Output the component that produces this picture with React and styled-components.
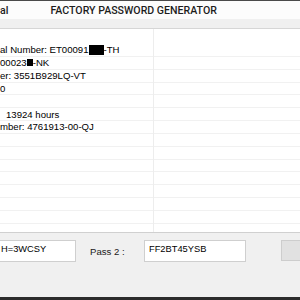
import styled, { createGlobalStyle } from "styled-components";

const GlobalStyle = createGlobalStyle`
  html, body {
    margin: 0;
    padding: 0;
    background: #f0f0f0;
    overflow: hidden;
  }
`;

const Window = styled.div`
  width: 300px;
  height: 300px;
  display: flex;
  flex-direction: column;
  overflow: hidden;
  background: #f0f0f0;
  font-family: "Liberation Sans", Arial, sans-serif;
  color: #000;
`;

const TitleBar = styled.div`
  height: 18px;
  border-top: 1px solid #4a4a4a;
  background: #fcfcfc;
  display: flex;
  align-items: center;
  font-family: Roboto, "Liberation Sans", sans-serif;
  font-size: 10.6px;
  font-weight: 500;
  color: #1c1c1c;
  white-space: nowrap;
`;

const TitleText = styled.span`
  margin-left: ${(p) => p.$left}px;
`;

const Band = styled.div`
  height: 9px;
  background: #f0f0f0;
  border-bottom: 1px solid #d6d6d6;
`;

const Panel = styled.div`
  height: 203px;
  background: #fff;
  display: flex;
  border-bottom: 1px solid #d0d0d0;
  overflow: hidden;
`;

const Column = styled.div`
  width: ${(p) => (p.$width ? `${p.$width}px` : "auto")};
  flex: ${(p) => (p.$width ? "none" : "1")};
  padding-top: 15px;
  border-right: ${(p) => (p.$divider ? "1px solid #ededed" : "none")};
`;

const Row = styled.div`
  height: 12.85px;
  box-sizing: border-box;
  border-bottom: 1px solid #f1f1f1;
  display: flex;
  align-items: center;
  font-size: 9.6px;
  white-space: nowrap;
  padding-left: ${(p) => p.$indent || 0}px;
`;

const Redact = styled.span`
  display: inline-block;
  width: ${(p) => p.$w}px;
  height: ${(p) => p.$h}px;
  background: #000;
`;

const Footer = styled.div`
  flex: 1;
  display: flex;
  align-items: flex-start;
  padding-top: 7px;
  background: #f0f0f0;
`;

const Field = styled.div`
  flex: none;
  height: 22px;
  box-sizing: border-box;
  width: ${(p) => p.$width}px;
  margin-left: ${(p) => p.$left}px;
  background: #fff;
  border: 1px solid #cfcfcf;
  padding: 3px 0 0 ${(p) => p.$pad}px;
  font-size: 9.3px;
  white-space: nowrap;
  overflow: hidden;
`;

const Label = styled.span`
  flex: none;
  margin-left: 14px;
  margin-top: 6px;
  font-size: 9.6px;
  color: #1a1a1a;
  width: 40px;
`;

const Button = styled.div`
  flex: none;
  margin-left: 35px;
  width: 24px;
  height: 21px;
  box-sizing: border-box;
  background: #e1e1e1;
  border: 1px solid #cdcdcd;
`;

const Taskbar = styled.div`
  height: 3px;
  background: #2c2c2c;
`;

const ROWS = 14;

export default function App() {
  const left = [
    <>al Number: ET00091<Redact $w={15} $h={10} />-TH</>,
    <>00023<Redact $w={6} $h={7} />-NK</>,
    <>er: 3551B929LQ-VT</>,
    <>0</>,
    null,
    <>13924 hours</>,
    <>mber: 4761913-00-QJ</>,
  ];

  return (
    <>
      <GlobalStyle />
      <Window>
        <TitleBar>
          <TitleText $left={0}>al</TitleText>
          <TitleText $left={42}>FACTORY PASSWORD GENERATOR</TitleText>
        </TitleBar>
        <Band />
        <Panel>
          <Column $width={153} $divider>
            {Array.from({ length: ROWS }).map((_, i) => (
              <Row key={i} $indent={i === 5 ? 6 : 0}>
                {left[i] || null}
              </Row>
            ))}
          </Column>
          <Column>
            {Array.from({ length: ROWS }).map((_, i) => (
              <Row key={i} />
            ))}
          </Column>
        </Panel>
        <Footer>
          <Field $width={77} $left={-1} $pad={1}>H=3WCSY</Field>
          <Label>Pass 2 :</Label>
          <Field $width={102} $left={14} $pad={4}>FF2BT45YSB</Field>
          <Button />
        </Footer>
        <Taskbar />
      </Window>
    </>
  );
}
